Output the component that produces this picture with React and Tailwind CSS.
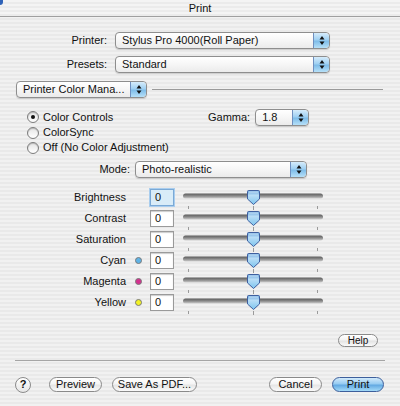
import React from "react";

const Stepper = () => (
  <div className="w-[16px] h-full shrink-0 border-l border-[#6f8fbf] rounded-r-[4px] bg-[linear-gradient(to_bottom,#d6ecfb_0%,#9fd0f2_45%,#7fbde9_55%,#b6e0f8_100%)] flex items-center justify-center">
    <svg width="8" height="11" viewBox="0 0 8 11">
      <path d="M4 1 L6.5 4.5 L1.5 4.5 Z" fill="#111" />
      <path d="M4 10 L6.5 6.5 L1.5 6.5 Z" fill="#111" />
    </svg>
  </div>
);

const Popup = ({ w, text }) => (
  <div
    className={`${w} h-[17px] flex items-stretch rounded-[4px] border border-[#8e8e8e] bg-[linear-gradient(to_bottom,#ffffff_0%,#f6f6f6_50%,#ebebeb_100%)] shadow-[0_1px_1px_rgba(0,0,0,0.15)]`}
  >
    <div className="flex-1 flex items-center pl-[6px] text-[11px] leading-none text-[#111] whitespace-nowrap overflow-hidden">
      {text}
    </div>
    <Stepper />
  </div>
);

const Radio = ({ on }) => (
  <div className="w-[12px] h-[12px] rounded-full border border-[#7c7c7c] bg-[linear-gradient(to_bottom,#e4e4e4,#ffffff)] flex items-center justify-center shadow-[inset_0_1px_1px_rgba(0,0,0,0.2)]">
    {on && <div className="w-[4px] h-[4px] rounded-full bg-[#111]" />}
  </div>
);

const Slider = () => (
  <svg width="142" height="21" viewBox="0 0 142 21" style={{ overflow: "visible" }}>
    <defs>
      <linearGradient id="trk" x1="0" y1="0" x2="0" y2="1">
        <stop offset="0" stopColor="#5c5c5c" />
        <stop offset="0.5" stopColor="#8a8a8a" />
        <stop offset="1" stopColor="#cfcfcf" />
      </linearGradient>
      <linearGradient id="thm" x1="0" y1="0" x2="0" y2="1">
        <stop offset="0" stopColor="#6aa6de" />
        <stop offset="0.35" stopColor="#b9ddf6" />
        <stop offset="1" stopColor="#7cc4ee" />
      </linearGradient>
    </defs>
    <rect x="1" y="6.5" width="140" height="5" rx="2.5" fill="url(#trk)" />
    <line x1="6.5" y1="19" x2="6.5" y2="22" stroke="#9a9a9a" strokeWidth="1" />
    <line x1="71.5" y1="19" x2="71.5" y2="23" stroke="#9a9a9a" strokeWidth="1" />
    <line x1="135.5" y1="19" x2="135.5" y2="22" stroke="#9a9a9a" strokeWidth="1" />
    <path
      d="M66.5 3.5 Q65.5 3.5 65.5 4.5 L65.5 12 L71.5 17.5 L77.5 12 L77.5 4.5 Q77.5 3.5 76.5 3.5 Z"
      fill="url(#thm)"
      stroke="#3f5f9f"
      strokeWidth="1"
    />
    <path d="M67 5 L76 5" stroke="#e6f4fd" strokeWidth="1" opacity="0.7" />
  </svg>
);

const Dot = ({ color }) =>
  color ? (
    <div className={`w-[7px] h-[7px] rounded-full border border-[#7a7a7a] ${color}`} />
  ) : (
    <div className="w-[7px] h-[7px]" />
  );

const SliderRow = ({ label, dot, focus }) => (
  <div className="h-[21px] flex items-center">
    <div className="w-[126px] text-right text-[11px] leading-none text-[#111]">{label}</div>
    <div className="w-[24px] flex justify-center">
      <Dot color={dot} />
    </div>
    <div
      className={`w-[24px] h-[17px] flex items-center pl-[4px] text-[11px] leading-none text-[#111] ${
        focus
          ? "bg-[#d9ecf8] border border-[#7aa9d6] shadow-[0_0_0_1px_#a9cdee]"
          : "bg-white border border-[#9a9a9a] shadow-[inset_0_1px_1px_rgba(0,0,0,0.2)]"
      }`}
    >
      0
    </div>
    <div className="ml-[8px]">
      <Slider />
    </div>
  </div>
);

const Btn = ({ w, children, primary }) => (
  <div
    className={`${w} h-[15px] rounded-full flex items-center justify-center text-[11px] leading-none text-[#111] ${
      primary
        ? "border border-[#3d5f9c] bg-[linear-gradient(to_bottom,#d2eafb_0%,#96cbf1_45%,#62a9e2_55%,#a4dbf8_100%)]"
        : "border border-[#8a8a8a] bg-[linear-gradient(to_bottom,#ffffff_0%,#f5f5f5_45%,#e6e6e6_55%,#fafafa_100%)]"
    }`}
  >
    {children}
  </div>
);

export default function App() {
  return (
    <div
      className="relative w-[400px] h-[406px] overflow-hidden text-[#111] bg-[repeating-linear-gradient(to_bottom,#f1f1f1_0px,#f1f1f1_2px,#e9e9e9_2px,#e9e9e9_4px)]"
      style={{ fontFamily: '"Liberation Sans", Arial, sans-serif' }}
    >
      <div className="absolute top-0 left-0 w-[3px] h-[5px] bg-[#2f63b8] rounded-br-[3px]" />
      {/* Title bar */}
      <div className="h-[17px] flex items-center justify-center border-b border-[#9f9f9f] bg-[repeating-linear-gradient(to_bottom,#f4f4f4_0px,#f4f4f4_2px,#ebebeb_2px,#ebebeb_4px)] text-[11px] leading-none">
        Print
      </div>

      {/* Printer */}
      <div className="mt-[15px] flex items-center">
        <div className="w-[107px] text-right text-[11px] leading-none">Printer:</div>
        <div className="ml-[8px]">
          <Popup w="w-[215px]" text="Stylus Pro 4000(Roll Paper)" />
        </div>
      </div>
      {/* Presets */}
      <div className="mt-[7px] flex items-center">
        <div className="w-[107px] text-right text-[11px] leading-none">Presets:</div>
        <div className="ml-[8px]">
          <Popup w="w-[215px]" text="Standard" />
        </div>
      </div>
      {/* Panel popup */}
      <div className="mt-[8px] flex items-center pl-[16px] pr-[17px]">
        <Popup w="w-[131px]" text="Printer Color Mana..." />
        <div className="ml-[5px] flex-1 h-px bg-[#9a9a9a]" />
      </div>

      {/* Radios */}
      <div className="mt-[11px] h-[16px] flex items-center">
        <div className="w-[208px] flex items-center pl-[27px]">
          <Radio on />
          <span className="ml-[4px] text-[11px] leading-none">Color Controls</span>
        </div>
        <div className="text-[11px] leading-none">Gamma:</div>
        <div className="ml-[5px]">
          <Popup w="w-[54px]" text="1.8" />
        </div>
      </div>
      <div className="h-[15px] flex items-center pl-[27px]">
        <Radio />
        <span className="ml-[4px] text-[11px] leading-none">ColorSync</span>
      </div>
      <div className="h-[15px] flex items-center pl-[27px]">
        <Radio />
        <span className="ml-[4px] text-[11px] leading-none">Off (No Color Adjustment)</span>
      </div>

      {/* Mode */}
      <div className="mt-[6px] flex items-center">
        <div className="w-[130px] text-right text-[11px] leading-none">Mode:</div>
        <div className="ml-[5px]">
          <Popup w="w-[172px]" text="Photo-realistic" />
        </div>
      </div>

      {/* Sliders */}
      <div className="mt-[9px] flex flex-col">
        <SliderRow label="Brightness" focus />
        <SliderRow label="Contrast" />
        <SliderRow label="Saturation" />
        <SliderRow label="Cyan" dot="bg-[#5fb3e6]" />
        <SliderRow label="Magenta" dot="bg-[#d4318f]" />
        <SliderRow label="Yellow" dot="bg-[#f2f224]" />
      </div>

      {/* Help */}
      <div className="mt-[21px] flex justify-end pr-[22px]">
        <div className="w-[40px] h-[13px] rounded-full border border-[#8a8a8a] bg-[linear-gradient(to_bottom,#ffffff_0%,#f3f3f3_45%,#e4e4e4_55%,#fafafa_100%)] flex items-center justify-center text-[10px] leading-none">
          Help
        </div>
      </div>

      {/* Separator */}
      <div className="mt-[13px] mx-[15px] h-px bg-[#a5a5a5]" />

      {/* Bottom buttons */}
      <div className="mt-[16px] h-[15px] flex items-center pl-[15px] pr-[16px]">
        <div className="w-[16px] h-[16px] rounded-full border border-[#8a8a8a] bg-[linear-gradient(to_bottom,#ffffff,#e6e6e6)] flex items-center justify-center text-[11px] font-bold leading-none">
          ?
        </div>
        <div className="ml-[18px]">
          <Btn w="w-[53px]">Preview</Btn>
        </div>
        <div className="ml-[10px]">
          <Btn w="w-[85px]">Save As PDF...</Btn>
        </div>
        <div className="ml-auto">
          <Btn w="w-[53px]">Cancel</Btn>
        </div>
        <div className="ml-[10px]">
          <Btn w="w-[52px]" primary>
            Print
          </Btn>
        </div>
      </div>
    </div>
  );
}
